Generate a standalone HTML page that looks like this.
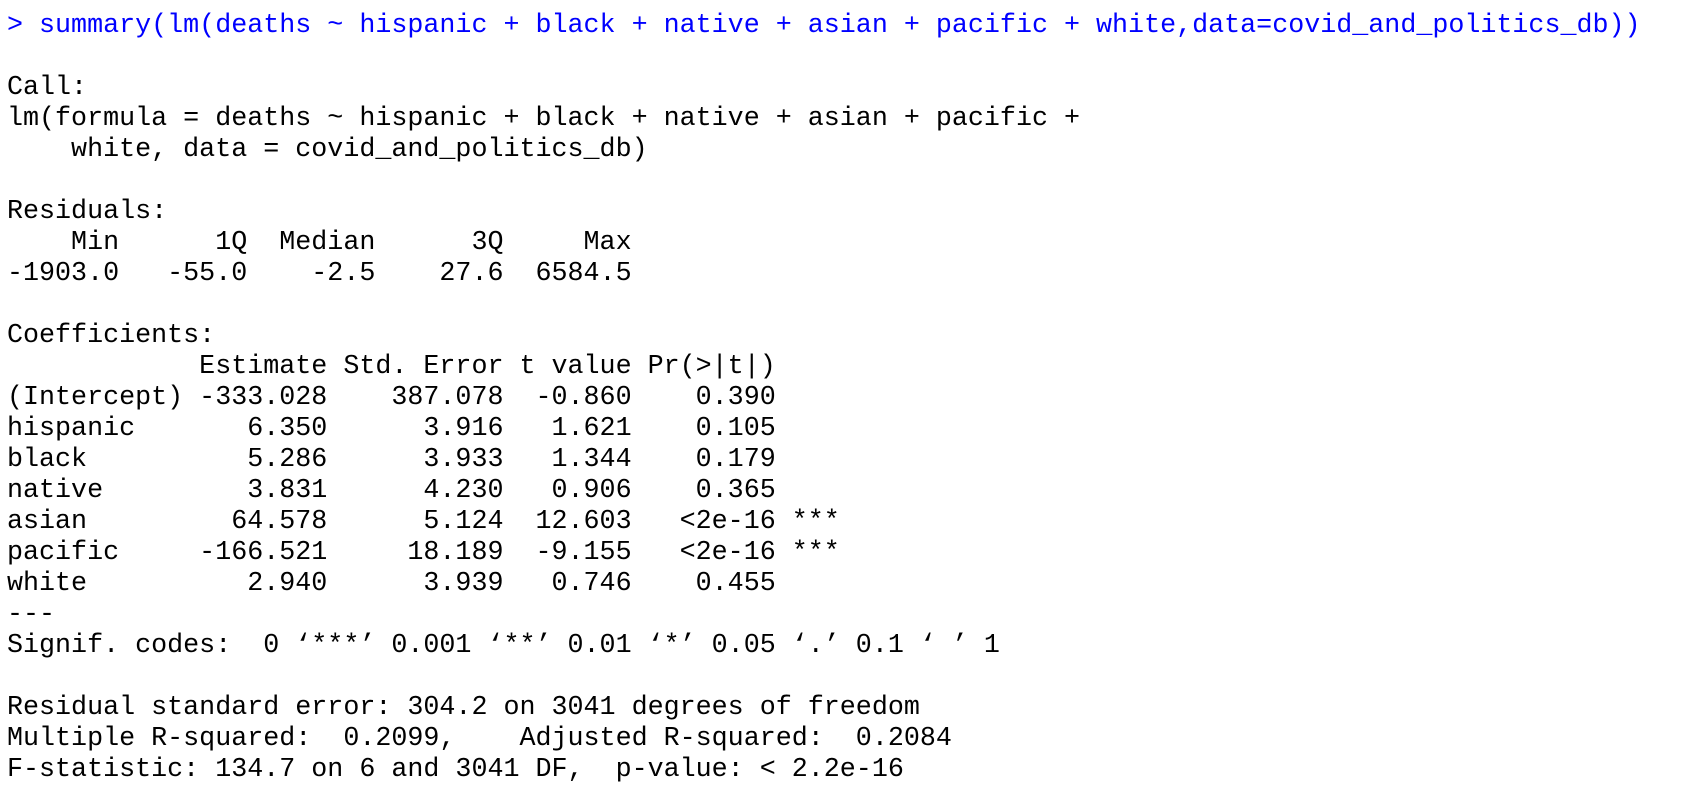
<!DOCTYPE html>
<html><head><meta charset="utf-8"><style>
html,body{margin:0;padding:0;background:#fff;width:1693px;height:793px;overflow:hidden}
pre{margin:0;position:absolute;left:7px;top:11px;font-family:"Liberation Mono",monospace;font-size:26.7px;line-height:31px;color:#000;letter-spacing:0}
.c{color:#0000ff}
</style></head><body>
<pre><span class="c">&gt; summary(lm(deaths ~ hispanic + black + native + asian + pacific + white,data=covid_and_politics_db))</span>

Call:
lm(formula = deaths ~ hispanic + black + native + asian + pacific + 
    white, data = covid_and_politics_db)

Residuals:
    Min      1Q  Median      3Q     Max 
-1903.0   -55.0    -2.5    27.6  6584.5 

Coefficients:
            Estimate Std. Error t value Pr(&gt;|t|)    
(Intercept) -333.028    387.078  -0.860    0.390    
hispanic       6.350      3.916   1.621    0.105    
black          5.286      3.933   1.344    0.179    
native         3.831      4.230   0.906    0.365    
asian         64.578      5.124  12.603   &lt;2e-16 ***
pacific     -166.521     18.189  -9.155   &lt;2e-16 ***
white          2.940      3.939   0.746    0.455    
---
Signif. codes:  0 ‘***’ 0.001 ‘**’ 0.01 ‘*’ 0.05 ‘.’ 0.1 ‘ ’ 1

Residual standard error: 304.2 on 3041 degrees of freedom
Multiple R-squared:  0.2099,	Adjusted R-squared:  0.2084 
F-statistic: 134.7 on 6 and 3041 DF,  p-value: &lt; 2.2e-16</pre>
</body></html>
